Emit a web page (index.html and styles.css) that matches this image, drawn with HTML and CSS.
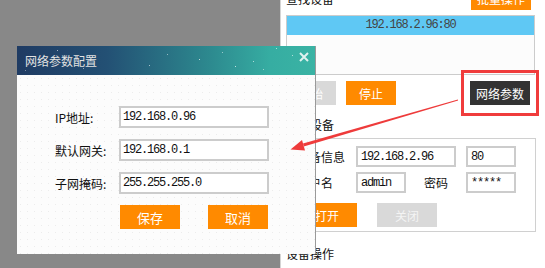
FILE: index.html
```html
<!DOCTYPE html>
<html lang="zh-CN">

<head>
  <meta charset="UTF-8" />
  <title>网络参数配置</title>
  <link rel="stylesheet" href="styles.css">
</head>

<body>
  <div class="page">
    <div class="mask"></div>

    <div class="panel">
      <div class="panel-head">
        <span>查找设备</span>
        <button class="btn btn-orange btn-batch">批量操作</button>
      </div>

      <div class="device-list">
        <div class="device-row active">192.168.2.96:80</div>
      </div>

      <div class="action-row">
        <button class="btn btn-gray">开始</button>
        <button class="btn btn-orange">停止</button>
        <button class="btn btn-dark">网络参数</button>
      </div>

      <div class="section-title">打开设备</div>
      <div class="group">
        <div class="form-row">
          <label class="g-label">设备信息</label>
          <input class="field field-ip" type="text" value="192.168.2.96" />
          <input class="field field-sm gap-left" type="text" value="80" />
        </div>
        <div class="form-row">
          <label class="g-label">用户名</label>
          <input class="field field-sm" type="text" value="admin" />
          <label class="g-label-pwd">密码</label>
          <input class="field field-sm" type="text" value="*****" />
        </div>
        <div class="btn-row">
          <button class="btn btn-orange">打开</button>
          <button class="btn btn-gray btn-light">关闭</button>
        </div>
      </div>

      <div class="section-title section-last">设备操作</div>
    </div>
  </div>

  <!-- 弹窗 -->
  <div class="dialog">
    <div class="dialog-title">
      网络参数配置
      <span class="stars"></span>
      <svg class="close" width="10" height="10" viewBox="0 0 10 10">
        <path d="M1 1 L9 9 M9 1 L1 9" stroke="#dff2ef" stroke-width="2" />
      </svg>
    </div>
    <div class="dialog-body">
      <div class="d-row">
        <label>IP地址:</label>
        <input class="d-field" type="text" value="192.168.0.96" />
      </div>
      <div class="d-row">
        <label>默认网关:</label>
        <input class="d-field" type="text" value="192.168.0.1" />
      </div>
      <div class="d-row">
        <label>子网掩码:</label>
        <input class="d-field" type="text" value="255.255.255.0" />
      </div>
      <div class="d-buttons">
        <button class="btn btn-orange">保存</button>
        <button class="btn btn-orange">取消</button>
      </div>
    </div>
  </div>

  <!-- 标注 -->
  <div class="highlight"></div>
  <svg class="arrow" width="545" height="268" viewBox="0 0 545 268">
    <polygon points="458.1,100.5 457.9,99.5 303,143.4 303.8,146.6" fill="#ee3b3b" />
    <polygon points="290.5,149.5 302,140 305,150.5" fill="#ee3b3b" />
  </svg>
</body>

</html>
```

FILE: styles.css
```css
* {
  margin: 0;
  padding: 0;
  box-sizing: border-box;
  font-family: "Noto Sans CJK SC", sans-serif;
}

body {
  width: 545px;
  height: 268px;
  overflow: hidden;
  position: relative;
  font-size: 12px;
  color: #111;
}

.page {
  display: flex;
  height: 268px;
}

.mask {
  width: 280px;
  background: #888888;
}

.panel {
  flex: 1;
  background: #fff;
  border-left: 1px solid #d4d4d4;
  padding: 0 10px 0 5px;
}

.btn {
  border: none;
  color: #fff;
  font-size: 12px;
  height: 24px;
  width: 50px;
  cursor: pointer;
}

.btn-orange {
  background: #ff8a00;
}

.btn-gray {
  background: #d9d9d9;
}

.btn-light {
  color: #f4f4f4;
}

.btn-dark {
  background: #333333;
  width: 60px;
  margin-left: auto;
  margin-right: 5px;
}

.panel-head {
  display: flex;
  align-items: center;
  justify-content: space-between;
  height: 24px;
  margin-top: -14px;
}

.btn-batch {
  width: 60px;
  margin-right: 4px;
}

.device-list {
  margin-top: 5px;
  height: 60px;
  border: 1px solid #cccccc;
  background: #fcfcfc;
}

.device-row {
  height: 19px;
  line-height: 19px;
  text-align: center;
  color: #444;
  font-family: "Liberation Mono", monospace;
  letter-spacing: -1.2px;
}

.device-row.active {
  background: #5fc8f4;
}

.action-row {
  display: flex;
  gap: 10px;
  margin-top: 6px;
}

.section-title {
  margin-top: 11px;
  line-height: 18px;
  height: 18px;
}

.section-last {
  margin-top: 13px;
}

.group {
  margin-top: 4px;
  border: 1px solid #d0d0d0;
  padding: 7px 0 4px 10px;
  margin-right: -1px;
}

.form-row {
  display: flex;
  align-items: center;
  height: 21px;
  margin-bottom: 5px;
}

.g-label {
  width: 59px;
}

.g-label-pwd {
  width: 42px;
  margin-left: 18px;
}

.field {
  height: 21px;
  border: 2px solid #cccccc;
  padding: 0 3px;
  font-family: "Liberation Mono", monospace;
  font-size: 12px;
  letter-spacing: -1.2px;
  color: #111;
  outline: none;
}

.field-ip {
  width: 100px;
}

.field-sm {
  width: 50px;
}

.gap-left {
  margin-left: 10px;
}

.btn-row {
  display: flex;
  gap: 20px;
  margin-top: 10px;
}

.btn-row .btn {
  width: 60px;
}

/* 弹窗 */
.dialog {
  position: absolute;
  left: 17px;
  top: 46px;
  width: 299px;
  height: 208px;
  background: #fcfcfc;
  border-right: 1px solid #9a9a9a;
}

.dialog-title {
  position: relative;
  height: 29px;
  line-height: 29px;
  padding-left: 8px;
  color: #e2e2e2;
  font-size: 12px;
  background: linear-gradient(90deg, #1f3b63 0%, #235074 30%, #2d8a8f 65%, #36ada2 85%, #3ab3a4 100%);
}

.stars {
  position: absolute;
  left: 0;
  top: 0;
  width: 1px;
  height: 1px;
  background: transparent;
  box-shadow: 40px 4px rgba(255, 255, 255, .6), 66px 22px rgba(255, 255, 255, .5),
    132px 19px rgba(255, 255, 255, .6), 150px 8px rgba(255, 255, 255, .5),
    182px 13px rgba(255, 255, 255, .7), 205px 6px rgba(255, 255, 255, .5),
    218px 20px rgba(255, 255, 255, .7), 236px 15px rgba(255, 255, 255, .6),
    246px 23px rgba(255, 255, 255, .5), 259px 2px rgba(255, 255, 255, .6),
    275px 9px rgba(255, 255, 255, .6), 8px 24px rgba(255, 255, 255, .4);
}

.close {
  position: absolute;
  right: 6px;
  top: 6px;
}

.dialog-body {
  height: 179px;
  padding: 31px 0 0 38px;
  background-color: #fcfcfc;
  background-image: radial-gradient(#ececec 0.7px, transparent 0.9px);
  background-size: 7px 7px;
}

.d-row {
  display: flex;
  align-items: center;
  height: 22px;
  margin-bottom: 11px;
}

.d-row label {
  width: 64px;
  font-size: 12px;
}

.d-field {
  width: 150px;
  height: 22px;
  border: 2px solid #cccccc;
  padding: 0 2px;
  font-family: "Liberation Mono", monospace;
  font-size: 12px;
  letter-spacing: -1.2px;
  color: #111;
  background: #fff;
  outline: none;
}

.d-buttons {
  display: flex;
  gap: 28px;
  margin-top: 11px;
  padding-left: 65px;
}

.d-buttons .btn {
  width: 60px;
  font-size: 13px;
}

/* 标注 */
.highlight {
  position: absolute;
  left: 461px;
  top: 70px;
  width: 78px;
  height: 46px;
  border: 3px solid #f03c3c;
}

.arrow {
  position: absolute;
  left: 0;
  top: 0;
  pointer-events: none;
}
```
